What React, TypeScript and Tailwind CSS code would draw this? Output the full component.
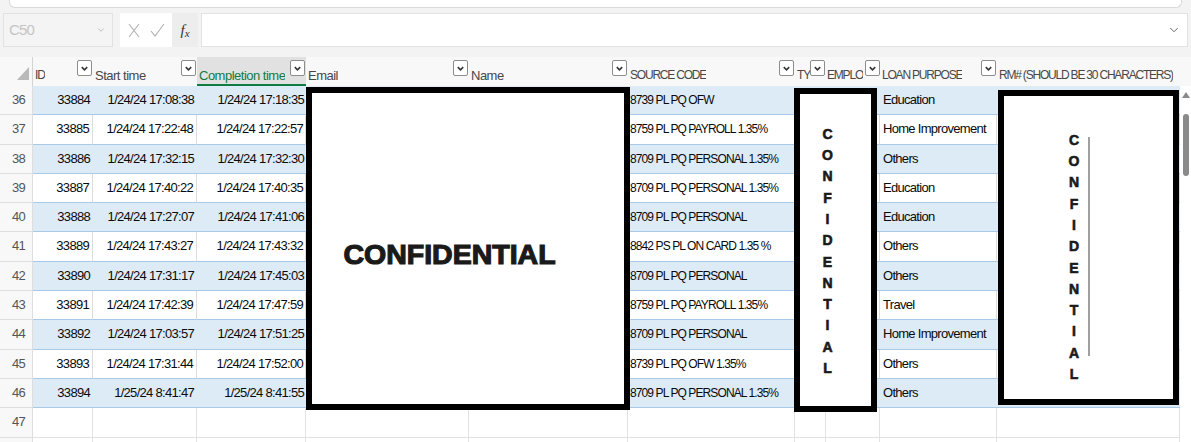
import { ChevronDown } from "lucide-react";

const cols =
  "grid grid-cols-[33px_60px_104px_109px_163px_159px_167px_31px_54px_117px_183px]";

const rows = [
  [36, 33884, "1/24/24 17:08:38", "1/24/24 17:18:35", "8739 PL PQ OFW", "Education"],
  [37, 33885, "1/24/24 17:22:48", "1/24/24 17:22:57", "8759 PL PQ PAYROLL 1.35%", "Home Improvement"],
  [38, 33886, "1/24/24 17:32:15", "1/24/24 17:32:30", "8709 PL PQ PERSONAL 1.35%", "Others"],
  [39, 33887, "1/24/24 17:40:22", "1/24/24 17:40:35", "8709 PL PQ PERSONAL 1.35%", "Education"],
  [40, 33888, "1/24/24 17:27:07", "1/24/24 17:41:06", "8709 PL PQ PERSONAL", "Education"],
  [41, 33889, "1/24/24 17:43:27", "1/24/24 17:43:32", "8842 PS PL ON CARD 1.35 %", "Others"],
  [42, 33890, "1/24/24 17:31:17", "1/24/24 17:45:03", "8709 PL PQ PERSONAL", "Others"],
  [43, 33891, "1/24/24 17:42:39", "1/24/24 17:47:59", "8759 PL PQ PAYROLL 1.35%", "Travel"],
  [44, 33892, "1/24/24 17:03:57", "1/24/24 17:51:25", "8709 PL PQ PERSONAL", "Home Improvement"],
  [45, 33893, "1/24/24 17:31:44", "1/24/24 17:52:00", "8739 PL PQ OFW 1.35%", "Others"],
  [46, 33894, "1/25/24 8:41:47", "1/25/24 8:41:55", "8709 PL PQ PERSONAL 1.35%", "Others"],
] as const;

// caps headers are squeezed harder, like Calibri caps
const headers = [
  { label: "ID", caps: true },
  { label: "Start time", caps: false },
  { label: "Completion time", caps: false },
  { label: "Email", caps: false },
  { label: "Name", caps: false },
  { label: "SOURCE CODE", caps: true },
  { label: "TY", caps: true },
  { label: "EMPLO", caps: true },
  { label: "LOAN PURPOSE", caps: true },
  { label: "RM# (SHOULD BE 30 CHARACTERS)", caps: true },
];

const letters = "CONFIDENTIAL".split("");

function Drop() {
  return (
    <div className="shrink-0 mt-[3px] w-[15px] h-[16px] rounded-[2px] border border-[#8d8d8d] bg-white flex items-center justify-center">
      <svg width="9" height="9" viewBox="0 0 10 10">
        <path d="M2 3.5 L5 6.5 L8 3.5" fill="none" stroke="#333" strokeWidth="1.7" />
      </svg>
    </div>
  );
}

function VerticalWord() {
  return (
    <div className="flex flex-col items-center text-[14px] leading-[21.3px] font-bold text-[#1a1a1a] [-webkit-text-stroke:0.6px_#1a1a1a]">
      {letters.map((l, i) => (
        <span key={i}>{l}</span>
      ))}
    </div>
  );
}

export default function App() {
  return (
    <div className="w-[1191px] h-[442px] overflow-hidden bg-[#f3f3f3] font-['Liberation_Sans',Arial,sans-serif] text-[13px] tracking-[-0.7px] text-[#0a0a0a]">
      {/* ribbon edge */}
      <div className="ml-[9px] w-[1173px] h-[8px] bg-white border border-t-0 border-[#d9d9d9] rounded-b-[6px]" />

      {/* formula bar */}
      <div className="flex mt-[5px] h-[34px] pl-[3px] pr-[3px] tracking-normal">
        <div className="w-[110px] border border-[#e2e2e2] bg-[#f4f4f4] flex items-center justify-between pl-[5px] pr-[6px]">
          <span className="text-[15px] tracking-[-0.8px] text-[#c4c4c4]">C50</span>
          <ChevronDown className="w-[10px] h-[10px] text-[#b5b5b5]" />
        </div>
        <div className="ml-[7px] w-[52px] bg-white flex items-center justify-center gap-[10px]">
          <svg width="12" height="15" viewBox="0 0 12 15">
            <path d="M1 1 L11 14 M11 1 L1 14" stroke="#b0b0b0" strokeWidth="1.1" fill="none" />
          </svg>
          <svg width="15" height="14" viewBox="0 0 15 14">
            <path d="M1 8 L5 13 L14 1" stroke="#b0b0b0" strokeWidth="1.1" fill="none" />
          </svg>
        </div>
        <div className="w-[26px] bg-[#ededed] flex items-center justify-center font-['Liberation_Serif',serif] italic text-[15px] text-[#333]">
          f<span className="text-[11px] mt-[6px]">x</span>
        </div>
        <div className="ml-[3px] flex-1 bg-white border border-[#e2e2e2] flex items-center justify-end pr-[6px]">
          <ChevronDown className="w-[14px] h-[14px] text-[#555]" strokeWidth={1.5} />
        </div>
      </div>

      {/* sheet */}
      <div className="relative mt-[10px]">
        {/* column headers */}
        <div className="flex">
          <div className={`${cols} h-[29px] bg-[#f8f8f8]`}>
            <div className="flex items-end justify-end pr-[3px] pb-[6px] border-r border-[#d4d4d4]">
              <div className="w-0 h-0 border-l-[12px] border-l-transparent border-b-[13px] border-b-[#b9b9b9]" />
            </div>
            {headers.map((h, i) => (
              <div
                key={h.label}
                className={`flex justify-between overflow-hidden ${i === 7 ? "pl-[1px] pr-0" : "pl-[2px] pr-[1px]"} ${
                  i === 2 ? "bg-[#e1e1e1] border-b-2 border-[#107c41] text-[#107c41]" : "text-[#474747]"
                }`}
              >
                <span
                  className={`mt-[9px] whitespace-nowrap overflow-hidden ${
                    h.caps ? "text-[12px] tracking-[-1.2px]" : "tracking-[-0.5px]"
                  }`}
                >
                  {h.label}
                </span>
                {i !== 9 && <Drop />}
              </div>
            ))}
          </div>
          <div className="w-[11px] bg-[#f8f8f8]" />
        </div>

        {/* body */}
        <div className="flex">
          <div>
            {rows.map((r, idx) => {
              const blue = idx % 2 === 0;
              const cell = blue
                ? "bg-[#ddebf7] border-b border-[#a9c9e8]"
                : "bg-white border-b border-r border-b-[#a9c9e8] border-r-[#dcdcdc]";
              return (
                <div key={r[0]} className={`${cols} h-[29.3px] leading-[28px]`}>
                  <div className="bg-[#f8f8f8] border-b border-r border-[#dedede] pl-[12px] text-[#555]">
                    {r[0]}
                  </div>
                  <div className={`${cell} text-right pr-[3px]`}>{r[1]}</div>
                  <div className={`${cell} text-right pr-[3px]`}>{r[2]}</div>
                  <div className={`${cell} text-right pr-[2px]`}>{r[3]}</div>
                  <div className={cell} />
                  <div className={cell} />
                  <div className={`${cell} pl-[2px] whitespace-nowrap text-[12px] tracking-[-0.9px]`}>{r[4]}</div>
                  <div className={cell} />
                  <div className={cell} />
                  <div className={`${cell} pl-[3px] whitespace-nowrap`}>{r[5]}</div>
                  <div className={cell} />
                </div>
              );
            })}
            {[47, 48].map((n) => (
              <div key={n} className={`${cols} h-[29.3px] leading-[28px]`}>
                <div className="bg-[#f8f8f8] border-b border-r border-[#dedede] pl-[12px] text-[#555]">
                  {n === 47 ? n : null}
                </div>
                {Array.from({ length: 10 }).map((_, i) => (
                  <div key={i} className="bg-white border-b border-r border-[#e1e1e1]" />
                ))}
              </div>
            ))}
          </div>

          {/* vertical scrollbar */}
          <div className="w-[11px] bg-white flex flex-col items-center pt-[6px]">
            <div className="w-0 h-0 border-l-[4px] border-r-[4px] border-b-[6px] border-l-transparent border-r-transparent border-b-[#8a8a8a]" />
            <div className="mt-[16px] w-[6px] h-[62px] rounded-full bg-[#8a8a8a]" />
          </div>
        </div>

        {/* pasted images over the sheet */}
        <div className="absolute left-[306px] top-[30px] w-[324px] h-[323px] border-[6px] border-black bg-white flex items-center justify-center pr-[37px] pt-[11px] tracking-normal">
          <span className="font-bold text-[28.5px] text-[#1a1a1a] [-webkit-text-stroke:1.2px_#1a1a1a]">
            CONFIDENTIAL
          </span>
        </div>

        <div className="absolute left-[794px] top-[31px] w-[83px] h-[324px] border-[6px] border-black bg-white flex items-center justify-center pr-[16px] pt-[3px] tracking-normal">
          <VerticalWord />
        </div>

        <div className="absolute left-[998px] top-[33px] w-[181px] h-[315px] border-[6px] border-black bg-white flex items-center justify-center pr-[18px] pt-[20px] tracking-normal">
          <VerticalWord />
          <div className="ml-[9px] mb-[22px] w-[2px] h-[219px] bg-[#a0a0a0]" />
        </div>
      </div>
    </div>
  );
}
